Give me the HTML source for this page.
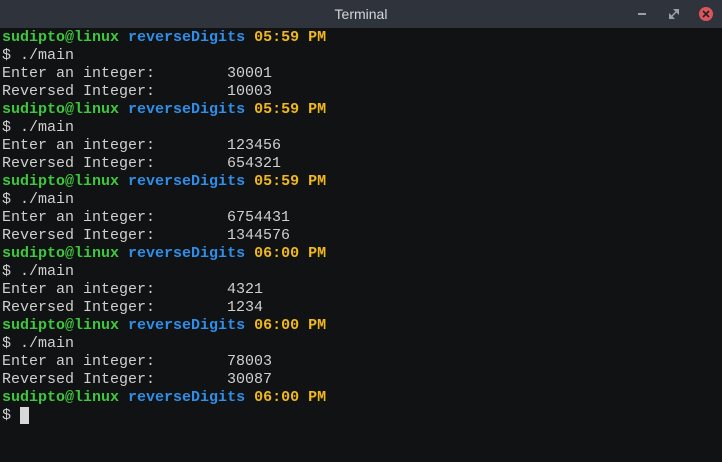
<!DOCTYPE html>
<html><head><style>
body{margin:0;width:722px;height:462px;background:#111213;overflow:hidden;position:relative}
#tb{position:absolute;left:0;top:0;width:722px;height:28px;background:#2f333c;color:#d4d6da;font:14px "Liberation Sans",sans-serif;text-align:center;line-height:28px}
#t{position:absolute;left:2px;top:29px;font:15px/18px "Liberation Mono",monospace;color:#d0d0d0;white-space:pre}
.g{color:#3ec83e;font-weight:bold}.b{color:#2f8ee8;font-weight:bold}.y{color:#f0b81c;font-weight:bold}
.cur{display:inline-block;width:9px;height:17px;background:#d8d8d8;vertical-align:top}
</style></head><body>
<div id="tb">Terminal
<div style="position:absolute;left:638px;top:13px;width:8px;height:2px;background:#9aa0a8"></div>
<svg style="position:absolute;left:669px;top:9px" width="10" height="10"><path d="M5 0H10V5ZM0 10V5L5 10Z M2 8L8 2" stroke="#9aa0a8" fill="#9aa0a8" stroke-width="1.5"/></svg>
<div style="position:absolute;left:699px;top:7px;width:14px;height:14px;border-radius:7px;background:#de545c"></div>
<svg style="position:absolute;left:702px;top:10px" width="8" height="8"><path d="M1 1L7 7M7 1L1 7" stroke="#222" stroke-width="1.6"/></svg>
</div>
<div id="t"><span class="g">sudipto@linux</span> <span class="b">reverseDigits</span> <span class="y">05:59 PM</span>
$ ./main
Enter an integer:        30001
Reversed Integer:        10003
<span class="g">sudipto@linux</span> <span class="b">reverseDigits</span> <span class="y">05:59 PM</span>
$ ./main
Enter an integer:        123456
Reversed Integer:        654321
<span class="g">sudipto@linux</span> <span class="b">reverseDigits</span> <span class="y">05:59 PM</span>
$ ./main
Enter an integer:        6754431
Reversed Integer:        1344576
<span class="g">sudipto@linux</span> <span class="b">reverseDigits</span> <span class="y">06:00 PM</span>
$ ./main
Enter an integer:        4321
Reversed Integer:        1234
<span class="g">sudipto@linux</span> <span class="b">reverseDigits</span> <span class="y">06:00 PM</span>
$ ./main
Enter an integer:        78003
Reversed Integer:        30087
<span class="g">sudipto@linux</span> <span class="b">reverseDigits</span> <span class="y">06:00 PM</span>
$ <span class="cur"></span></div>
</body></html>
